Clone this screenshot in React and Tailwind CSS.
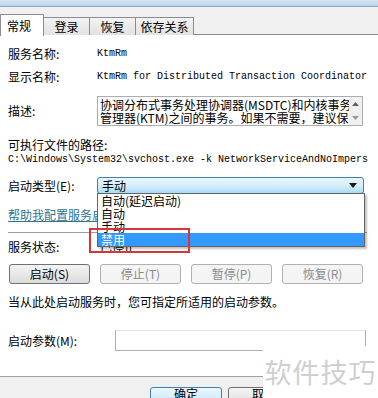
import React from "react";

const cjk = "font-['Noto_Sans_CJK_SC','Noto_Sans',sans-serif]";
const mono = "font-['Liberation_Mono','Noto_Sans_CJK_SC',monospace]";

const Tab = ({ label, active, className = "" }) => (
  <div
    className={
      active
        ? `h-[21px] mt-0 bg-white border border-b-0 border-[#898c95] px-[6px] flex items-center text-[12px] relative z-10 ${className}`
        : `h-[18px] mt-[3px] bg-gradient-to-b from-[#f3f3f3] to-[#e2e2e2] border border-b-0 border-[#898c95] flex items-center justify-center text-[12px] ${className}`
    }
  >
    {label}
  </div>
);

const Btn = ({ label, disabled }) => (
  <div
    className={
      disabled
        ? "w-[81px] h-[20px] rounded-[3px] border border-[#adb2b5] bg-[#f4f4f4] text-[#8a8a8a] text-[12px] flex items-center justify-center"
        : "w-[81px] h-[20px] rounded-[3px] border border-[#707070] bg-gradient-to-b from-[#f4f4f4] to-[#dcdcdc] text-black text-[12px] flex items-center justify-center"
    }
  >
    {label}
  </div>
);

const Row = ({ label, children, className = "" }) => (
  <div className={`flex items-center ${className}`}>
    <div className="w-[89px] shrink-0">{label}</div>
    {children}
  </div>
);

export default function App() {
  const options = ["自动(延迟启动)", "自动", "手动", "禁用"];
  return (
    <div className={`w-[378px] h-[398px] overflow-hidden relative bg-[#f0f0f0] text-black ${cjk}`}>
      {/* window glass strip */}
      <div className="h-[7px] bg-gradient-to-b from-[#d6e5f3] to-[#bcd3ea] border-b border-[#8da6c0]" />

      {/* tabs */}
      <div className="h-[28px] flex items-end">
        <div className="flex w-full h-[21px] items-start border-b border-[#898c95]">
          <Tab label="常规" active className="w-[44px] -mb-px h-[22px]" />
          <Tab label="登录" className="w-[47px] -ml-px" />
          <Tab label="恢复" className="w-[47px] -ml-px" />
          <Tab label="依存关系" className="w-[59px] -ml-px" />
        </div>
      </div>

      {/* tab page */}
      <div className="bg-white h-[342px] pl-[8px] text-[12px] leading-[14px] border-b border-[#a0a0a0]">
        <Row label="服务名称:" className="pt-[12px]">
          <span className={`${mono} text-[10px]`}>KtmRm</span>
        </Row>
        <Row label="显示名称:" className="mt-[9px]">
          <span className={`${mono} text-[10px] whitespace-nowrap`}>
            KtmRm for Distributed Transaction Coordinator
          </span>
        </Row>
        <Row label="描述:" className="mt-[12px]">
          <div className="w-[266px] h-[30px] border border-[#abadb3] flex">
            <div className="flex-1 overflow-hidden pl-[2px] text-[12px] leading-[13px] whitespace-nowrap pt-[1px]">
              <div>协调分布式事务处理协调器(MSDTC)和内核事务</div>
              <div>管理器(KTM)之间的事务。如果不需要，建议保</div>
            </div>
            <div className="w-[13px] bg-[#f0f0f0] flex flex-col items-center justify-between py-[5px]">
              <svg width="7" height="4" viewBox="0 0 7 4">
                <path d="M0 4 L3.5 0 L7 4 Z" fill="#606060" />
              </svg>
              <svg width="7" height="4" viewBox="0 0 7 4">
                <path d="M0 0 L3.5 4 L7 0 Z" fill="#9a9a9a" />
              </svg>
            </div>
          </div>
        </Row>
        <div className="mt-[12px]">可执行文件的路径:</div>
        <div className={`${mono} text-[10px] mt-[1px] whitespace-nowrap overflow-hidden`}>
          C:\Windows\System32\svchost.exe -k NetworkServiceAndNoImpers
        </div>
        <Row label="启动类型(E):" className="mt-[10px]">
          <div className="w-[267px] h-[17px] rounded-[3px] border border-[#3c7fb1] bg-gradient-to-b from-[#eaf6fd] via-[#d7effc] to-[#a9dbf6] flex items-center justify-between pl-[4px] pr-[6px]">
            <span>手动</span>
            <svg width="8" height="5" viewBox="0 0 8 5">
              <path d="M0 0 L8 0 L4 5 Z" fill="#1a1a1a" />
            </svg>
          </div>
        </Row>
        <div className="mt-[14px] text-[#2e7592] underline">帮助我配置服务启动选项。</div>
        <div className="mt-[10px] mr-[11px] h-px bg-[#a0a0a0]" />
        <Row label="服务状态:" className="mt-[7px]">
          <span className="ml-[3px]">已停止</span>
        </Row>
        <div className="mt-[10px] flex gap-[10px] pl-[1px]">
          <Btn label="启动(S)" />
          <Btn label="停止(T)" disabled />
          <Btn label="暂停(P)" disabled />
          <Btn label="恢复(R)" disabled />
        </div>
        <div className="mt-[11px] whitespace-nowrap">当从此处启动服务时，您可指定所适用的启动参数。</div>
        <div className="mt-[21px] flex items-center">
          <div className="w-[107px] shrink-0">启动参数(M):</div>
          <div className="w-[251px] h-[21px] border border-[#abadb3] border-t-[#e2e3ea]" />
        </div>
      </div>

      {/* bottom buttons */}
      <div className="flex gap-[6px] pl-[150px] pt-[10px]">
        <div className="w-[72px] h-[22px] rounded-[3px] border border-[#3c7fb1] bg-gradient-to-b from-[#eaf6fd] to-[#bee6fd] flex items-center justify-center text-[12px] pb-[8px]">
          确定
        </div>
        <div className="w-[72px] h-[22px] rounded-[3px] border border-[#707070] bg-gradient-to-b from-[#f4f4f4] to-[#dcdcdc] flex items-center justify-center text-[12px] pb-[8px]">
          取消
        </div>
      </div>

      {/* dropdown list */}
      <div className="absolute left-[97px] top-[193px] w-[268px] border border-[#646464] bg-white text-[12px] shadow-[2px_2px_2px_rgba(0,0,0,0.25)]">
        {options.map((o) => (
          <div
            key={o}
            className={
              o === "禁用"
                ? "h-[13px] leading-[13px] pl-[3px] bg-[#3399ff] text-white"
                : "h-[13px] leading-[13px] pl-[3px]"
            }
          >
            {o}
          </div>
        ))}
      </div>

      {/* red highlight */}
      <div className="absolute left-[89px] top-[228px] w-[101px] h-[25px] border-2 border-[#d4363c]" />

      {/* watermark */}
      <div className="absolute left-[263px] top-[346px] w-[115px] h-[52px] bg-white flex items-center justify-center text-[27px] text-[#cfcfcf] tracking-[1px]">
        软件技巧
      </div>
    </div>
  );
}
